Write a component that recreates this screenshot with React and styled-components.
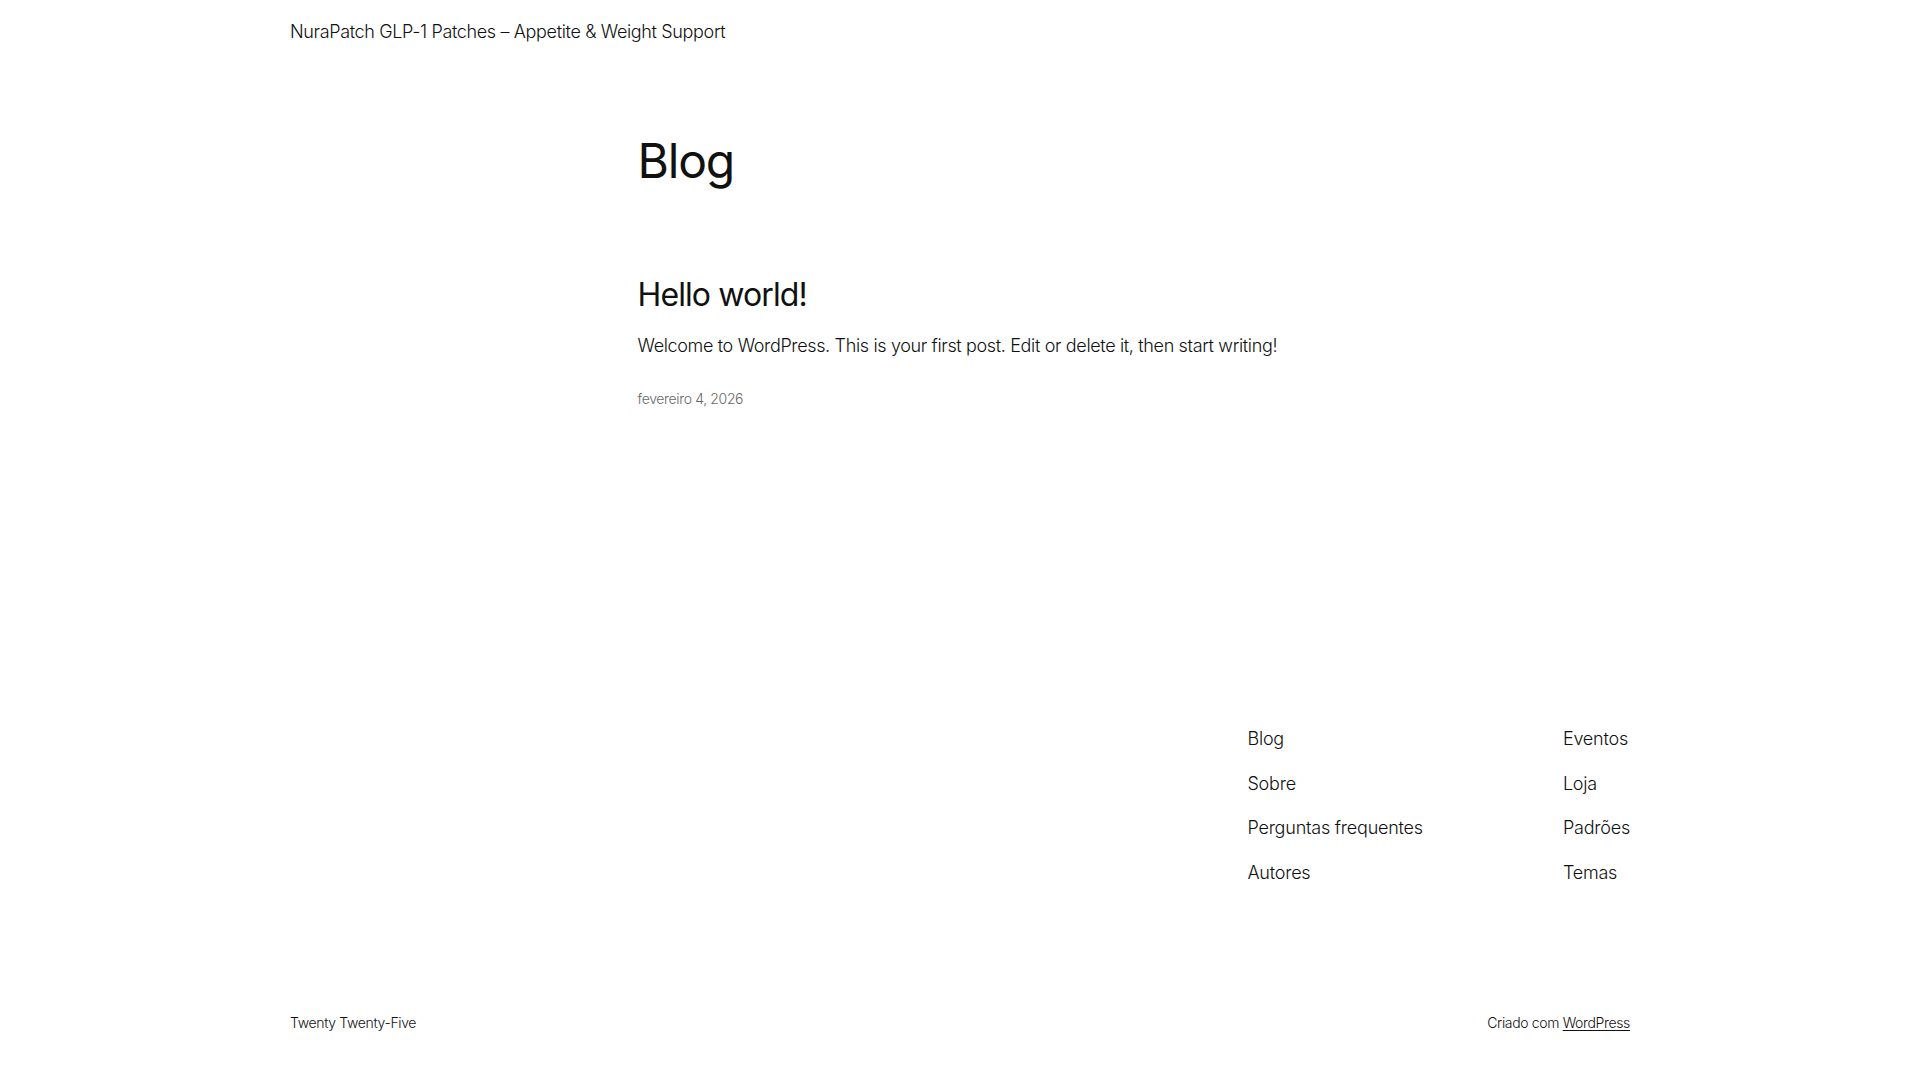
import React from "react";
import styled, { createGlobalStyle } from "styled-components";

const GlobalStyle = createGlobalStyle`
  html, body {
    margin: 0;
    padding: 0;
    background: #ffffff;
  }
  body {
    font-family: Inter, "Noto Sans", "Liberation Sans", sans-serif;
    font-weight: 300;
    color: #111111;
    letter-spacing: -0.022em;
    -webkit-font-smoothing: antialiased;
  }
  * { box-sizing: border-box; }
`;

const Page = styled.div`
  display: flex;
  flex-direction: column;
  min-height: 100vh;
`;

const Wide = styled.div`
  width: 1340px;
  max-width: 100%;
  margin: 0 auto;
`;

const Header = styled.header`
  padding-top: 19.3px;
`;

const SiteTitle = styled.a`
  display: inline-block;
  font-size: 18px;
  line-height: 1.4;
  font-weight: 300;
  color: #111111;
  text-decoration: none;
`;

const Main = styled.main`
  width: 645px;
  margin: 0 auto;
  padding-top: 90px;
`;

const PageTitle = styled.h1`
  margin: 0;
  font-size: 48px;
  line-height: 1.125;
  font-weight: 400;
  letter-spacing: -0.025em;
`;

const Post = styled.article`
  margin-top: 89px;
  display: flex;
  flex-direction: column;
`;

const PostTitle = styled.h2`
  margin: 0;
  font-size: 32px;
  line-height: 1.125;
  font-weight: 400;
  letter-spacing: -0.028em;

  a {
    color: inherit;
    text-decoration: none;
  }
`;

const Excerpt = styled.p`
  margin: 20px 0 0;
  font-size: 18px;
  line-height: 1.4;
  white-space: nowrap;
`;

const PostDate = styled.time`
  display: block;
  margin-top: 30px;
  font-size: 14px;
  line-height: 1.4;
  letter-spacing: -0.025em;
  color: #686868;
`;

const Footer = styled.footer`
  margin-top: 318px;
  padding-bottom: 48px;
`;

const FooterNavs = styled.div`
  display: flex;
  justify-content: flex-end;
  gap: 140px;
`;

const NavColumn = styled.nav`
  display: flex;
  flex-direction: column;
  gap: 19.3px;
`;

const NavLink = styled.a`
  font-size: 18px;
  line-height: 1.4;
  letter-spacing: -0.012em;
  color: #111111;
  text-decoration: none;
`;

const FooterBottom = styled.div`
  margin-top: 128px;
  display: flex;
  justify-content: space-between;
  align-items: center;
  font-size: 14px;
  line-height: 1.4;
  letter-spacing: -0.025em;
`;

const Small = styled.p`
  margin: 0;
  color: #111111;

  a {
    color: inherit;
    text-decoration: underline;
    text-decoration-thickness: 1px;
    text-underline-offset: 2px;
  }
`;

const navA = ["Blog", "Sobre", "Perguntas frequentes", "Autores"];
const navB = ["Eventos", "Loja", "Padrões", "Temas"];

export default function App() {
  return (
    <>
      <GlobalStyle />
      <Page>
        <Header>
          <Wide>
            <SiteTitle href="#">
              NuraPatch GLP-1 Patches – Appetite &amp; Weight Support
            </SiteTitle>
          </Wide>
        </Header>
        <Main>
          <PageTitle>Blog</PageTitle>
          <Post>
            <PostTitle>
              <a href="#">Hello world!</a>
            </PostTitle>
            <Excerpt>
              Welcome to WordPress. This is your first post. Edit or delete it,
              then start writing!
            </Excerpt>
            <PostDate dateTime="2026-02-04">fevereiro 4, 2026</PostDate>
          </Post>
        </Main>
        <Footer>
          <Wide>
            <FooterNavs>
              <NavColumn>
                {navA.map((t) => (
                  <NavLink key={t} href="#">
                    {t}
                  </NavLink>
                ))}
              </NavColumn>
              <NavColumn>
                {navB.map((t) => (
                  <NavLink key={t} href="#">
                    {t}
                  </NavLink>
                ))}
              </NavColumn>
            </FooterNavs>
            <FooterBottom>
              <Small>Twenty Twenty-Five</Small>
              <Small>
                Criado com <a href="#">WordPress</a>
              </Small>
            </FooterBottom>
          </Wide>
        </Footer>
      </Page>
    </>
  );
}
